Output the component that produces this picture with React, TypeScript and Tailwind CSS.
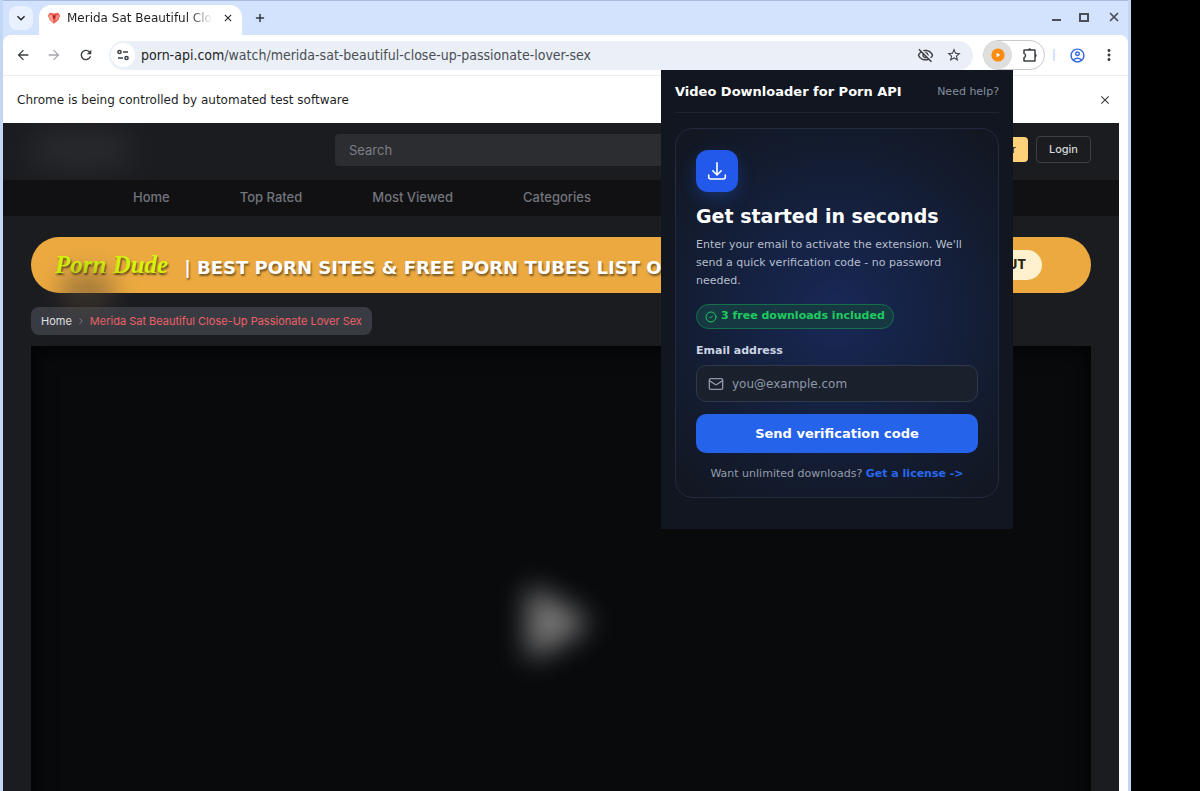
import React from 'react';
import {
  MdArrowBack,
  MdArrowForward,
  MdClose,
  MdKeyboardArrowDown,
  MdMoreVert,
  MdOutlineAccountCircle,
  MdOutlineVisibilityOff,
  MdRefresh,
  MdStarBorder,
} from 'react-icons/md';
import { ChevronRight, CircleCheck, Mail, Plus, X } from 'lucide-react';

const navItems = ['Home', 'Top Rated', 'Most Viewed', 'Categories', 'Channels'];

const TuneIcon: React.FC = () => (
  <svg viewBox="0 0 14 14" className="w-3.5 h-3.5" fill="none" stroke="currentColor" strokeWidth="1.5">
    <circle cx="3.5" cy="4" r="1.6" />
    <path d="M7 4h5M2 10h5" />
    <circle cx="10.5" cy="10" r="1.6" />
  </svg>
);

const ExtensionIcon: React.FC = () => (
  <svg viewBox="0 0 16 16" className="w-4 h-4" fill="none" stroke="currentColor" strokeWidth="1.5" strokeLinejoin="round">
    <path d="M2 3h11v11H2v-3.4a2.2 2.2 0 0 0 0-4.2z" />
    <path d="M6 3a1.7 1.7 0 0 1 3.4 0zM13 6.8a1.7 1.7 0 0 1 0 3.4z" fill="currentColor" stroke="none" />
  </svg>
);

const Favicon: React.FC = () => (
  <svg viewBox="0 0 14 12" className="w-3.5 h-3 shrink-0">
    <path d="M.8 3.5 3 .8l4 .6 4-.6 2.2 2.7L11.4 8 7 11.8 2.6 8z" fill="#ec5a4e" />
    <path d="M1.2 3.5 5.2 2.6 6.6 11 3 7.6z" fill="#f7a18f" />
    <path d="m5.6 3 1.4.7 1.6-.8-.6 3-1 1-.9-1z" fill="#a91f2a" />
    <path d="m9.4 3.2 3-.2-1.4 3.9-2.8 2.7z" fill="#f98e7f" />
  </svg>
);

const TabStrip: React.FC = () => (
  <div className="flex h-9 items-end border-t border-[#a9bbdc] bg-[#d3e3fd] pl-1.5">
    <button aria-label="Search tabs" className="mb-1.5 flex h-6 w-6 items-center justify-center rounded-lg bg-[#e9f1fe] text-[#1f1f1f]">
      <MdKeyboardArrowDown className="h-4 w-4" />
    </button>
    <div className="ml-1.5 flex h-[31px] w-[203px] items-center rounded-t-xl bg-white pl-2 pr-1.5 pb-1.5">
      <Favicon />
      <span className="ml-1.5 flex-1 overflow-hidden whitespace-nowrap bg-linear-to-r from-[#1f1f1f] from-85% to-transparent bg-clip-text text-[12px] text-transparent">
        Merida Sat Beautiful Close-Up
      </span>
      <button aria-label="Close tab" className="ml-2 p-0.5 text-[#1f1f1f]">
        <MdClose className="h-3 w-3" />
      </button>
    </div>
    <button aria-label="New tab" className="mb-3 ml-3 text-[#33373d]">
      <Plus className="h-3 w-3" strokeWidth={3} />
    </button>
    <div className="mb-3 ml-auto flex items-center gap-[18px] pr-[7px] text-[#4a4f57]">
      <button aria-label="Minimize" className="flex h-2 w-[9px] items-end">
        <span className="h-0.5 w-full bg-current" />
      </button>
      <button aria-label="Maximize" className="h-[9px] w-[10px] border-2 border-current" />
      <button aria-label="Close window">
        <X className="h-3.5 w-3.5" strokeWidth={3} />
      </button>
    </div>
  </div>
);

const Toolbar: React.FC = () => (
  <div className="bg-[#d3e3fd]">
    <div className="-mt-px flex h-[41px] items-center rounded-t-lg border-b border-[#ececec] bg-white pl-3 pr-2.5 text-[#3c4043]">
      <button aria-label="Back"><MdArrowBack className="h-4 w-4" /></button>
      <button aria-label="Forward" className="ml-[15px] text-[#a5a7aa]"><MdArrowForward className="h-4 w-4" /></button>
      <button aria-label="Reload" className="ml-4"><MdRefresh className="h-4 w-4" /></button>
      <div className="ml-[15px] flex h-[29px] flex-1 items-center rounded-full bg-[#ebf0f8] pl-0.5 pr-[11px]">
        <button aria-label="Site information" className="flex h-6 w-6 items-center justify-center rounded-full bg-white">
          <TuneIcon />
        </button>
        <p className="ml-1.5 flex-1 truncate font-['DejaVu_Sans_Condensed','DejaVu_Sans',sans-serif] text-[14px] text-[#4a4d51]">
          <span className="text-[#1f1f1f]">porn-api.com</span>/watch/merida-sat-beautiful-close-up-passionate-lover-sex
        </p>
        <button aria-label="Tracking protection"><MdOutlineVisibilityOff className="h-[17px] w-[17px]" /></button>
        <button aria-label="Bookmark" className="ml-3"><MdStarBorder className="h-4 w-4" /></button>
      </div>
      <div className="ml-2.5 flex h-[30px] items-center rounded-full border border-[#c9c9c9] pr-1.5">
        <button aria-label="Video downloader" className="flex h-7 w-7 items-center justify-center rounded-full bg-[#dedede]">
          <svg viewBox="0 0 14 14" className="h-3.5 w-3.5">
            <circle cx="7" cy="7" r="6.6" fill="#fb8c0f" />
            <path d="M5.6 4.8v4.4L9.2 7z" fill="#fff" />
          </svg>
        </button>
        <button aria-label="Extensions" className="ml-2.5"><ExtensionIcon /></button>
      </div>
      <span className="ml-2 h-3 w-0.5 bg-[#d3e3fd]" />
      <button aria-label="Profile" className="ml-3.5 text-[#2f66d8]"><MdOutlineAccountCircle className="h-[17px] w-[17px]" /></button>
      <button aria-label="Menu" className="ml-3.5"><MdMoreVert className="h-[18px] w-[18px]" /></button>
    </div>
  </div>
);

const SiteHeader: React.FC = () => (
  <header>
    <div className="flex h-[57px] items-center overflow-hidden px-7 pb-1">
      <div className="h-8 w-[100px] rounded-full bg-[#38393c] opacity-60 blur-lg" />
      <input
        aria-label="Search"
        placeholder="Search"
        className="ml-[204px] h-8 min-w-0 flex-1 rounded bg-[#2b2d31] px-3.5 text-[13px] placeholder:text-[#7c7f86] outline-none"
      />
      <button className="ml-16 h-[25px] rounded bg-[#ffd27a] px-3 text-[11px] font-medium text-[#3a2a12]">Register</button>
      <button className="ml-2 h-[27px] rounded border border-[#3d4043] px-3 text-[11px] font-medium text-[#d5d6d8]">Login</button>
    </div>
    <nav className="flex h-9 items-center gap-[70px] overflow-hidden bg-[#111113] pl-[130px] text-[13px] font-medium text-[#72757d]">
      {navItems.map((item) => (
        <a key={item} href="#" className="whitespace-nowrap">{item}</a>
      ))}
    </nav>
  </header>
);

const Banner: React.FC = () => (
  <div className="relative mt-[21px]">
    <div className="flex h-14 items-center overflow-hidden rounded-full bg-[#eba940] pl-6 pr-[49px]">
      <span className="shrink-0 font-['Liberation_Serif',serif] text-[25px] font-bold italic text-[#d4f50a] [text-shadow:1px_2px_2px_rgba(0,0,0,0.6)]">
        Porn Dude
      </span>
      <p className="ml-4 min-w-0 flex-1 overflow-hidden whitespace-nowrap pt-1.5 font-['DejaVu_Sans',sans-serif] text-lg font-bold text-white [text-shadow:1px_2px_2px_rgba(0,0,0,0.5)]">
        | BEST PORN SITES &amp; FREE PORN TUBES LIST OF
      </p>
      <button className="h-[30px] shrink-0 rounded-full bg-[#fff1cd] px-4 text-[13px] font-extrabold text-[#2b2413]">
        CHECK IT OUT
      </button>
    </div>
    {/* soft smudge under the logo */}
    <div className="absolute left-7 top-9 h-9 w-14 rounded-full bg-[#5a4a35] opacity-50 blur-md" />
  </div>
);

const ExtensionPopup: React.FC = () => (
  <section className="absolute right-[115px] top-[70px] h-[459px] w-[352px] bg-[#111620] px-3.5 text-[11px]">
    <header className="flex h-[43px] items-center justify-between border-b border-[#1f2530] pt-0.5">
      <h1 className="text-[13px] font-bold text-white">Video Downloader for Porn API</h1>
      <a href="#" className="text-[#868e9e]">Need help?</a>
    </header>
    <form
      onSubmit={(e) => e.preventDefault()}
      className="mt-[15px] h-[370px] rounded-[18px] border border-[#232c3e] bg-[radial-gradient(circle_at_50%_50%,#192857_0%,#152243_35%,#131b2e_70%,#12161f_100%)] px-5 pt-[21px]"
    >
      <div className="flex h-[42px] w-[42px] items-center justify-center rounded-xl bg-[#2359ea] shadow-[0_6px_16px_rgba(37,99,235,0.3)]">
        <svg viewBox="0 0 20 20" className="h-5 w-5" fill="none" stroke="#fff" strokeWidth="1.6" strokeLinecap="round" strokeLinejoin="round">
          <path d="M10 1.8v11M5.8 9.8l4.2 4.2 4.2-4.2M1.7 14v2a2 2 0 0 0 2 2h12.6a2 2 0 0 0 2-2v-2" />
        </svg>
      </div>
      <h2 className="mt-3 text-[19px] font-bold leading-6 text-white">Get started in seconds</h2>
      <p className="mt-2 leading-[18px] text-[#b6bfce]">
        Enter your email to activate the extension. We'll send a quick verification code - no password needed.
      </p>
      <div className="mt-3.5 inline-flex h-[25px] items-center gap-1 rounded-full border border-[#15704b] bg-[#153842] px-2 font-bold text-[#1fcb5f]">
        <CircleCheck className="h-3 w-3" />
        3 free downloads included
      </div>
      <label htmlFor="email" className="mt-3.5 block font-bold leading-4 text-[#ccd5e3]">Email address</label>
      <div className="mt-1.5 flex h-[37px] items-center rounded-[10px] border border-[#2f394b] bg-[#1a212d] px-[11px] text-[#8f98a7]">
        <Mail className="h-4 w-4 shrink-0" />
        <input
          id="email"
          type="email"
          placeholder="you@example.com"
          className="ml-2 min-w-0 flex-1 bg-transparent text-[12px] placeholder:text-[#8f98a7] outline-none"
        />
      </div>
      <button className="mt-3 h-[39px] w-full rounded-[10px] bg-[#2563eb] text-[13px] font-bold text-white">Send verification code</button>
      <p className="mt-3 text-center leading-[18px] text-[#939cac]">
        Want unlimited downloads? <a href="#" className="font-bold text-[#2868f0]">Get a license -&gt;</a>
      </p>
    </form>
  </section>
);

const App: React.FC = () => {
  return (
    <div className="h-screen overflow-hidden bg-black pr-[69px] font-['DejaVu_Sans',sans-serif]">
      <div className="relative flex h-full flex-col border-x-[3px] border-[#c3d6f5]">
        <TabStrip />
        <Toolbar />
        <div className="flex h-[47px] items-center justify-between bg-white pl-3.5 pr-4 text-[12px] text-[#1f1f1f]">
          <span>Chrome is being controlled by automated test software</span>
          <button aria-label="Dismiss" className="text-[#3c4043]"><MdClose className="h-3.5 w-3.5" /></button>
        </div>
        <div className="min-h-0 flex-1 bg-white pr-[9px]">
          <main className="flex h-full flex-col overflow-hidden bg-[#1b1c20] font-['Inter',sans-serif]">
            <SiteHeader />
            <div className="px-7">
              <Banner />
              <nav aria-label="Breadcrumb" className="mt-3.5 flex h-7 w-fit items-center gap-1 rounded-lg bg-[#393b42] px-2.5 text-[11px]">
                <a href="#" className="text-[#e2e3e5]">Home</a>
                <ChevronRight className="h-2.5 w-2.5 text-[#8b8e95]" />
                <span className="text-[#ee6168]">Merida Sat Beautiful Close-Up Passionate Lover Sex</span>
              </nav>
              <div className="mt-[11px] flex h-[554px] items-center justify-center bg-[#090a0c] shadow-[inset_0_0_24px_#000]">
                <button aria-label="Play" className="blur-[14px]">
                  <svg viewBox="0 0 72 80" className="h-20 w-[72px]" fill="#777">
                    <path d="M2 12q0-9 9-6l46 26q8 8 0 16L11 74q-9 3-9-6z" />
                  </svg>
                </button>
              </div>
            </div>
          </main>
        </div>
        <ExtensionPopup />
      </div>
    </div>
  );
};

export default App;
